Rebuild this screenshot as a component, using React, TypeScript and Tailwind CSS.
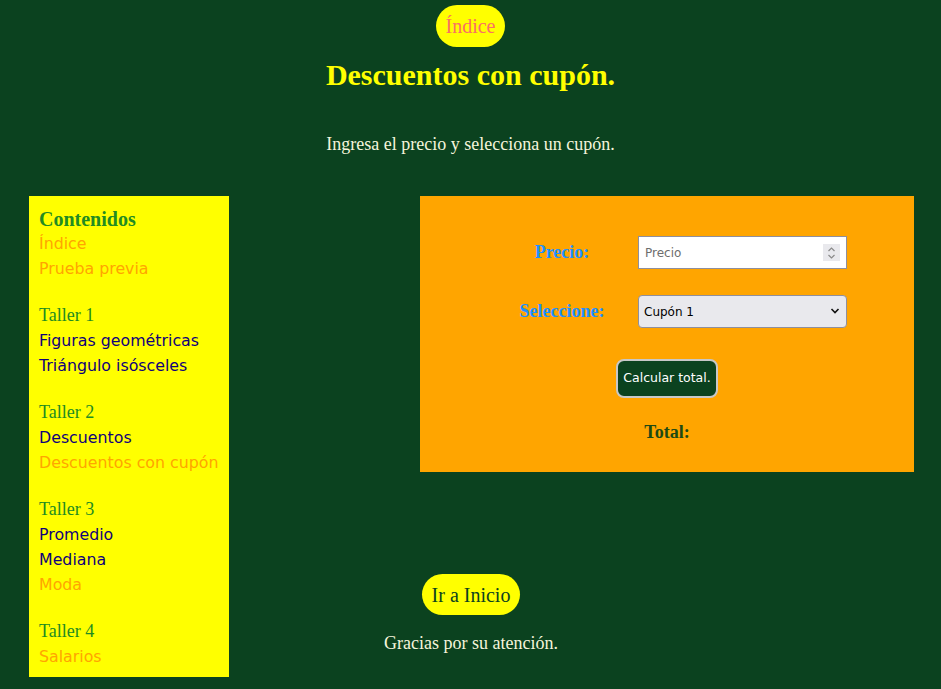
const serif = "font-['Liberation_Serif',serif]";
const sans = "font-['DejaVu_Sans',sans-serif]";

type Link = { label: string; color: string };

const groups: { title?: string; links: Link[] }[] = [
  {
    links: [
      { label: "Índice", color: "text-[#ffa500]" },
      { label: "Prueba previa", color: "text-[#ffa500]" },
    ],
  },
  {
    title: "Taller 1",
    links: [
      { label: "Figuras geométricas", color: "text-[#10007a]" },
      { label: "Triángulo isósceles", color: "text-[#10007a]" },
    ],
  },
  {
    title: "Taller 2",
    links: [
      { label: "Descuentos", color: "text-[#10007a]" },
      { label: "Descuentos con cupón", color: "text-[#ffa500]" },
    ],
  },
  {
    title: "Taller 3",
    links: [
      { label: "Promedio", color: "text-[#10007a]" },
      { label: "Mediana", color: "text-[#10007a]" },
      { label: "Moda", color: "text-[#ffa500]" },
    ],
  },
  {
    title: "Taller 4",
    links: [{ label: "Salarios", color: "text-[#ffa500]" }],
  },
];

function Sidebar() {
  return (
    <aside className="w-[200px] shrink-0 bg-[#ffff00] pl-[10px] pt-[11px] pb-[8px]">
      <h3 className={`${serif} text-[20px] font-bold leading-[24px] text-[#228b22]`}>Contenidos</h3>
      {groups.map((g, i) => (
        <div key={i} className={i > 0 ? "mt-[22px]" : ""}>
          {g.title && (
            <div className={`${serif} text-[18px] leading-[25px] text-[#228b22]`}>{g.title}</div>
          )}
          {g.links.map((l) => (
            <a key={l.label} href="#" className={`${sans} ${l.color} block whitespace-nowrap text-[15.8px] leading-[25px]`}>
              {l.label}
            </a>
          ))}
        </div>
      ))}
    </aside>
  );
}

function CouponForm() {
  return (
    <section className="flex h-[276px] w-[494px] flex-col items-center bg-[#ffa500] pt-[40px]">
      <div className="grid grid-cols-[150px_209px] gap-x-px gap-y-[26px]">
        <label className={`${serif} self-center text-center text-[18px] font-bold text-[#1e90ff]`}>Precio:</label>
        <div className="relative h-[33px]">
          <input
            type="text"
            placeholder="Precio"
            className={`${sans} h-full w-full border border-[#8f8f9d] bg-white px-[6px] text-[12px] text-black placeholder:text-[#6d6d6d] outline-none`}
          />
          <div className="absolute right-[7px] top-[8px] flex h-[17px] w-[17px] flex-col items-center justify-center bg-[#e9e9ed]">
            <svg width="9" height="14" viewBox="0 0 9 14" fill="none" stroke="#8a8a8a" strokeWidth="1.2">
              <path d="M1.5 5 L4.5 2 L7.5 5" />
              <path d="M1.5 9 L4.5 12 L7.5 9" />
            </svg>
          </div>
        </div>
        <label className={`${serif} self-center text-center text-[18px] font-bold text-[#1e90ff]`}>Seleccione:</label>
        <div className="relative h-[33px]">
          <select
            defaultValue="1"
            className={`${sans} h-full w-full appearance-none rounded-[4px] border border-[#8f8f9d] bg-[#e9e9ed] px-[5px] text-[12px] text-black outline-none`}
          >
            <option value="1">Cupón 1</option>
            <option value="2">Cupón 2</option>
            <option value="3">Cupón 3</option>
          </select>
          <svg
            className="pointer-events-none absolute right-[7px] top-[12px]"
            width="10"
            height="8"
            viewBox="0 0 10 8"
            fill="none"
            stroke="#111"
            strokeWidth="1.6"
          >
            <path d="M1.5 2 L5 5.5 L8.5 2" />
          </svg>
        </div>
      </div>
      <button
        className={`${sans} mt-[31px] h-[39px] w-[102px] rounded-[8px] border-2 border-[#c8c8c8] bg-[#0b421f] text-[12.5px] text-white`}
      >
        Calcular total.
      </button>
      <p className={`${serif} mt-[23px] text-[18px] font-bold leading-[22px] text-[#1d4a14]`}>Total:</p>
    </section>
  );
}

export default function App() {
  return (
    <div className={`${serif} min-h-[689px] bg-[#0b421f] pt-[5px] pb-[20px]`}>
      <div className="flex justify-center">
        <a href="#" className="flex h-[42px] items-center rounded-full bg-[#ffff00] px-[10px] text-[20px] text-[#fa7064]">
          Índice
        </a>
      </div>
      <h1 className="mt-[10px] text-center text-[30px] font-bold leading-[36px] text-[#ffff00]">Descuentos con cupón.</h1>
      <p className="mt-[39px] text-center text-[18px] leading-[24px] text-[#f5f5dc]">
        Ingresa el precio y selecciona un cupón.
      </p>

      <div className="mt-[40px] flex pl-[29px] pr-[27px]">
        <Sidebar />
        <div className="flex flex-1 flex-col">
          <div className="flex justify-end">
            <CouponForm />
          </div>
          <div className="flex w-[484px] flex-col items-center">
            <a href="#" className="mt-[102px] flex h-[41px] items-center rounded-full bg-[#ffff00] px-[10px] text-[20px] text-[#0b421f]">
              Ir a Inicio
            </a>
            <p className="mt-[17px] text-[18px] leading-[22px] text-[#f5f5dc]">Gracias por su atención.</p>
          </div>
        </div>
      </div>
    </div>
  );
}
